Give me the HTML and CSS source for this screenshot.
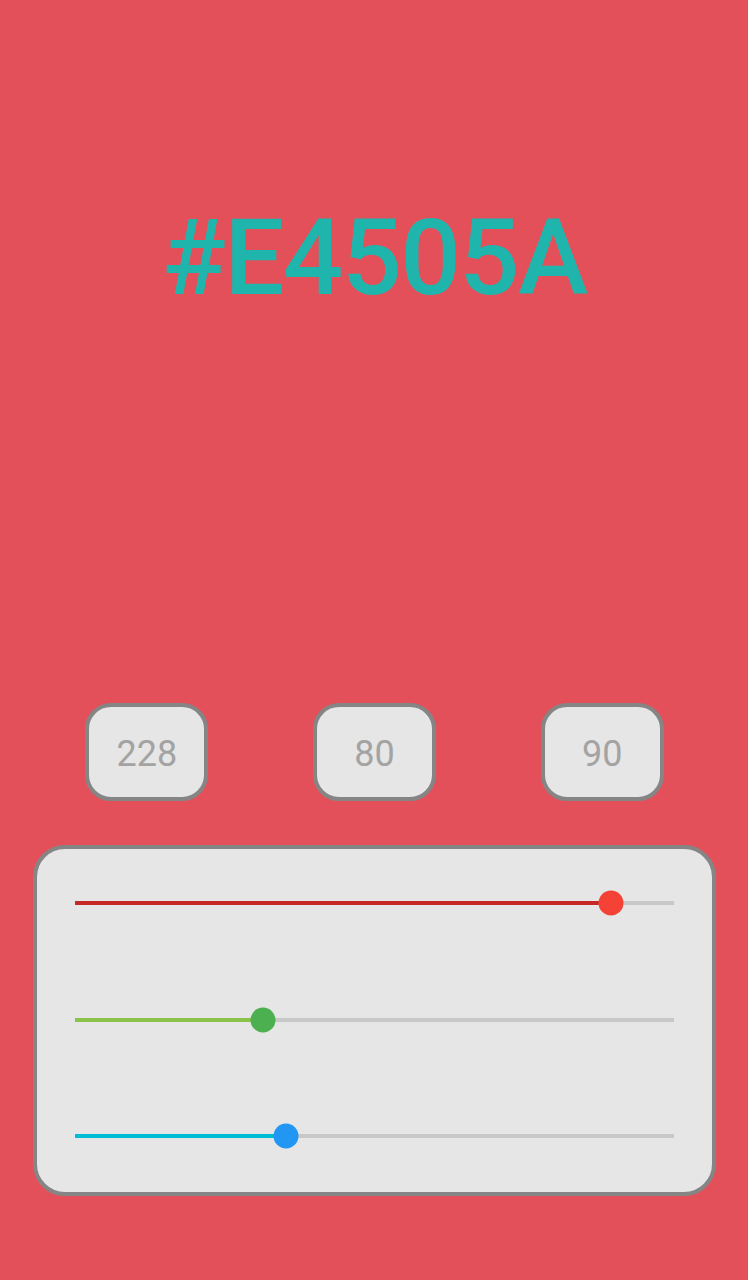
FILE: index.html
```html
<!DOCTYPE html>
<html lang="en">
<head>
<meta charset="utf-8">
<title>Color Picker</title>
<link rel="stylesheet" href="styles.css">
</head>
<body>
<main class="app">
  <header class="hero">
    <h1 class="hex">#E4505A</h1>
  </header>
  <section class="values">
    <div class="cell"><div class="value-box">228</div></div>
    <div class="cell"><div class="value-box">80</div></div>
    <div class="cell"><div class="value-box">90</div></div>
  </section>
  <section class="panel">
    <div class="slider red">
      <div class="track">
        <div class="fill" style="width: 89.41%"></div>
        <div class="thumb" style="left: 89.41%"></div>
      </div>
    </div>
    <div class="slider green">
      <div class="track">
        <div class="fill" style="width: 31.37%"></div>
        <div class="thumb" style="left: 31.37%"></div>
      </div>
    </div>
    <div class="slider blue">
      <div class="track">
        <div class="fill" style="width: 35.29%"></div>
        <div class="thumb" style="left: 35.29%"></div>
      </div>
    </div>
  </section>
</main>
</body>
</html>
```

FILE: styles.css
```css
html, body {
  margin: 0;
  padding: 0;
}

body {
  background: #e4505a;
  font-family: Roboto, "Liberation Sans", sans-serif;
  width: 748px;
  height: 1280px;
  overflow: hidden;
}

.app {
  display: flex;
  flex-direction: column;
  padding: 0 32px 0 33px;
}

.hero {
  height: 703px;
  display: flex;
  justify-content: center;
}

.hex {
  margin: 194px 0 0 0;
  font-size: 106px;
  line-height: 128px;
  font-weight: 500;
  color: #1fb5ad;
  letter-spacing: -1.5px;
}

.values {
  display: grid;
  grid-template-columns: repeat(3, 1fr);
}

.cell {
  display: flex;
  justify-content: center;
}

.value-box {
  box-sizing: border-box;
  width: 123px;
  height: 98px;
  border: 4px solid #858585;
  border-radius: 26px;
  background: #e6e6e6;
  color: #a3a3a3;
  font-size: 36px;
  padding-top: 4px;
  display: flex;
  align-items: center;
  justify-content: center;
}

.panel {
  box-sizing: border-box;
  margin-top: 44px;
  height: 351px;
  border: 4px solid #858585;
  border-radius: 32px;
  background: #e6e6e6;
  padding: 41px 38px 43px;
  display: flex;
  flex-direction: column;
  justify-content: space-between;
}

.slider {
  height: 26px;
  display: flex;
  align-items: center;
}

.track {
  position: relative;
  width: 100%;
  height: 4px;
  background: #c8c8c8;
}

.fill {
  height: 100%;
}

.thumb {
  position: absolute;
  top: 50%;
  width: 25px;
  height: 25px;
  border-radius: 50%;
  transform: translate(-50%, -50%);
}

.red .fill { background: #c62828; }
.red .thumb { background: #f44336; }
.green .fill { background: #8bc34a; }
.green .thumb { background: #4caf50; }
.blue .fill { background: #00bcd4; }
.blue .thumb { background: #2196f3; }
```
